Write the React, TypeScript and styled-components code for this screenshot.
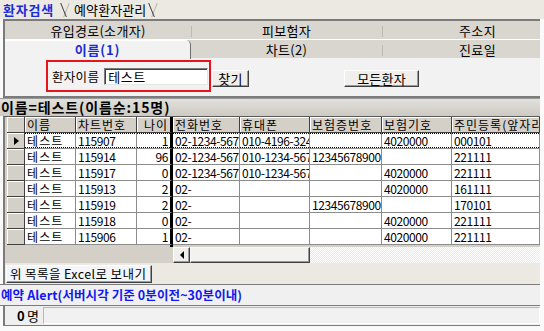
import React from "react";
import styled, { createGlobalStyle, css } from "styled-components";

const GlobalStyle = createGlobalStyle`
  html, body { margin: 0; padding: 0; }
  body {
    background: #fafafa;
    font-family: "Noto Sans CJK KR", "Noto Sans", sans-serif;
    font-size: 12px;
    color: #000;
    width: 544px;
    height: 331px;
    overflow: hidden;
  }
`;

const Page = styled.div`
  width: 544px;
  height: 331px;
  display: flex;
  flex-direction: column;
`;

/* ---------- top tab strip ---------- */
const TopStrip = styled.div`
  height: 19px;
  background: #ebe9e2;
  display: flex;
  padding-left: 2px;
`;

const TopTab = styled.div<{ $active?: boolean }>`
  position: relative;
  display: flex;
  align-items: center;
  height: 19px;
  padding-left: ${(p) => (p.$active ? "1px" : "0")};
  padding-right: ${(p) => (p.$active ? "14px" : "10px")};
  font-size: 13px;
  font-weight: ${(p) => (p.$active ? 700 : 400)};
  letter-spacing: ${(p) => (p.$active ? "0.8px" : "0.1px")};
  color: ${(p) => (p.$active ? "#1b2bd6" : "#000")};
  &::after {
    content: "";
    position: absolute;
    right: 4px;
    top: 3px;
    bottom: 2px;
    border-right: 1px solid #3c3c3c;
    transform: skewX(22deg);
  }
  &::before {
    content: "";
    position: absolute;
    right: 1px;
    top: 3px;
    bottom: 2px;
    border-right: 1px solid #b8b6ae;
    transform: skewX(-22deg);
  }
`;

const TabGap = styled.div`
  width: 6px;
`;

/* ---------- framed sections ---------- */
const Framed = styled.div`
  margin-left: 3px;
  width: 537px;
  box-sizing: border-box;
  border-left: 2px solid #7b7b7b;
`;

const UpperFrame = styled(Framed)`
  border-top: 2px solid #7b7b7b;
  background: #d9d6cf;
  overflow: hidden;
`;

const TabRow = styled.div<{ $first?: boolean }>`
  display: grid;
  grid-template-columns: 186px 191px 191px;
  height: 18px;
  border-bottom: ${(p) => (p.$first ? "1px solid #ffffff" : "none")};
  background: #d9d6cf;
`;

const TabCell = styled.div<{ $selected?: boolean; $sep?: boolean }>`
  position: relative;
  display: flex;
  align-items: center;
  justify-content: center;
  font-size: 13px;
  font-weight: ${(p) => (p.$selected ? 700 : 400)};
  letter-spacing: ${(p) => (p.$selected ? "0.8px" : "0.3px")};
  color: ${(p) => (p.$selected ? "#1b2bd6" : "#000")};
  white-space: nowrap;
  ${(p) =>
    p.$selected &&
    css`
      background: #f2f2f2;
      border-top-right-radius: 5px;
      border-right: 1px solid #6e6e6e;
      box-shadow: inset 0 1px 0 #ffffff;
    `}
  ${(p) =>
    p.$sep &&
    css`
      &::before {
        content: "";
        position: absolute;
        left: 0;
        top: 5px;
        height: 11px;
        border-left: 1px solid #bdbab3;
      }
    `}
`;

const SearchPanel = styled.div`
  height: 38px;
  background: #f2f2f2;
  border-bottom: 2px solid #7b7b7b;
  display: flex;
  align-items: center;
  padding-left: 41px;
`;

const RedBox = styled.div`
  box-sizing: border-box;
  width: 165px;
  height: 32px;
  border: 2px solid #e8141a;
  display: flex;
  align-items: center;
  padding-left: 4px;
  margin-top: 3px;
  margin-bottom: 6px;
`;

const Label = styled.span`
  font-size: 12.5px;
  letter-spacing: 0.3px;
  margin-right: 5px;
  margin-top: 2px;
`;

const InputBox = styled.div`
  box-sizing: border-box;
  width: 104px;
  height: 17px;
  margin-top: 2px;
  background: #fff;
  border: 1px solid;
  border-color: #7a7a7a #e6e6e6 #e6e6e6 #7a7a7a;
  box-shadow: inset 1px 1px 0 #404040;
  font-size: 13px;
  line-height: 15px;
  padding-left: 3px;
  letter-spacing: 0.6px;
`;

const Button = styled.div<{ $w: number; $ml: number }>`
  box-sizing: border-box;
  width: ${(p) => p.$w}px;
  margin-left: ${(p) => p.$ml}px;
  margin-top: 2px;
  height: 17px;
  background: #f0efec;
  border: 1px solid;
  border-color: #ffffff #404040 #404040 #ffffff;
  box-shadow: inset -1px -1px 0 #9a9a9a;
  display: flex;
  align-items: center;
  justify-content: center;
  font-size: 13px;
  letter-spacing: 0.2px;
  white-space: nowrap;
`;

/* ---------- grid caption ---------- */
const Caption = styled.div`
  width: 540px;
  height: 18px;
  box-sizing: border-box;
  background: linear-gradient(#e2e0db, #cdcac3);
  border-top: 1px solid #9a9a9a;
  font-size: 14px;
  font-weight: 700;
  letter-spacing: 0.9px;
  line-height: 17px;
  padding-left: 1px;
  white-space: nowrap;
`;

/* ---------- data grid ---------- */
const GridFrame = styled(Framed)`
  background: #d4d0c8;
  padding-left: 2px;
  border-top: 1px solid #5a5a5a;
`;

const Row = styled.div`
  display: grid;
  grid-template-columns: 18px 51px 61px 36px 67px 70px 72px 70px 88px;
  height: 16px;
`;

const Selector = styled.div`
  box-sizing: border-box;
  height: 16px;
  background: #d4d0c8;
  border-right: 1px solid #404040;
  border-bottom: 1px solid #404040;
  box-shadow: inset 1px 1px 0 #ffffff;
  display: flex;
  align-items: center;
  justify-content: center;
`;

const Pointer = styled.span`
  width: 0;
  height: 0;
  border-left: 5px solid #000;
  border-top: 4px solid transparent;
  border-bottom: 4px solid transparent;
  margin-left: 1px;
`;

const HeadCell = styled.div<{ $right?: boolean; $thick?: boolean }>`
  box-sizing: border-box;
  height: 16px;
  background: #d4d0c8;
  border-right: ${(p) => (p.$thick ? "3px solid #000" : "1px solid #404040")};
  border-bottom: 1px solid #404040;
  box-shadow: inset 1px 1px 0 #ffffff;
  font-size: 12px;
  line-height: 15px;
  letter-spacing: 1px;
  padding: 0 2px;
  text-align: ${(p) => (p.$right ? "right" : "left")};
  white-space: nowrap;
  overflow-x: clip;
  overflow-y: visible;
`;

const dotted = "repeating-linear-gradient(90deg, #000 0 1px, transparent 1px 2px)";

const Cell = styled.div<{ $right?: boolean; $thick?: boolean; $focus?: boolean; $ko?: boolean }>`
  box-sizing: border-box;
  height: 16px;
  background-color: #fff;
  border-right: ${(p) => (p.$thick ? "3px solid #000" : "1px solid #8c8c8c")};
  border-bottom: 1px solid #8c8c8c;
  font-size: 12px;
  line-height: 15px;
  letter-spacing: ${(p) => (p.$ko ? "1.1px" : "-0.4px")};
  padding: 0 2px;
  text-align: ${(p) => (p.$right ? "right" : "left")};
  white-space: nowrap;
  overflow-x: clip;
  overflow-y: visible;
  ${(p) =>
    p.$focus &&
    css`
      background-image: ${dotted}, ${dotted};
      background-size: 100% 1px, 100% 1px;
      background-position: 0 0, 0 100%;
      background-repeat: no-repeat;
    `}
`;

const ScrollRow = styled.div`
  display: flex;
  height: 18px;
`;

const FrozenFill = styled.div`
  width: 163px;
  background: #d4d0c8;
`;

const ThickStub = styled.div`
  width: 3px;
  height: 2px;
  background: #000;
`;

const Scrollbar = styled.div`
  flex: 1;
  margin-top: 2px;
  height: 16px;
  display: flex;
`;

const ArrowBtn = styled.div`
  box-sizing: border-box;
  width: 17px;
  height: 16px;
  background: #f0efec;
  border: 1px solid;
  border-color: #ffffff #404040 #404040 #ffffff;
  box-shadow: inset -1px -1px 0 #9a9a9a;
  display: flex;
  align-items: center;
  justify-content: center;
`;

const LeftArrow = styled.span`
  width: 0;
  height: 0;
  border-right: 4px solid #000;
  border-top: 4px solid transparent;
  border-bottom: 4px solid transparent;
`;

const Thumb = styled.div`
  box-sizing: border-box;
  width: 120px;
  height: 16px;
  background: #f3f2ef;
  border: 1px solid;
  border-color: #f8f8f8 #404040 #404040 #f8f8f8;
  box-shadow: inset -1px -1px 0 #9a9a9a;
`;

const Track = styled.div`
  flex: 1;
  height: 16px;
  background-color: #f5f4f0;
  background-image: repeating-conic-gradient(#ffffff 0 25%, #ebeae4 0 50%);
  background-size: 2px 2px;
`;

/* ---------- bottom sections ---------- */
const ExcelRow = styled(Framed)`
  height: 21px;
  background: #ebe9e2;
  display: flex;
  align-items: center;
  padding-left: 1px;
`;

const ExcelButton = styled.div`
  box-sizing: border-box;
  width: 146px;
  height: 18px;
  background: #f4f5f9;
  border: 1px solid;
  border-color: #ffffff #404040 #404040 #ffffff;
  box-shadow: inset -1px -1px 0 #9a9a9a;
  font-size: 12.5px;
  line-height: 16px;
  padding-left: 3px;
  letter-spacing: 0.4px;
  white-space: nowrap;
  overflow: hidden;
`;

const AlertTitle = styled.div`
  width: 540px;
  height: 22px;
  box-sizing: border-box;
  background: #f0f0f0;
  border-top: 1px solid #7b7b7b;
  border-bottom: 1px solid #7b7b7b;
  color: #1219f0;
  font-size: 12.5px;
  font-weight: 700;
  letter-spacing: 0.1px;
  line-height: 20px;
  padding-left: 1px;
  white-space: nowrap;
`;

const CountRow = styled(Framed)`
  height: 20px;
  background: #efefef;
  border-bottom: 1px solid #7b7b7b;
  display: flex;
  align-items: center;
`;

const CountNum = styled.span`
  font-weight: 700;
  font-size: 13px;
  margin-left: 12px;
  width: 10px;
`;

const CountUnit = styled.span`
  font-size: 13px;
  width: 16px;
`;

const CountBox = styled.div`
  flex: 1;
  height: 17px;
  box-sizing: border-box;
  border: 1px solid;
  border-color: #b8b8b8 #ffffff #ffffff #b8b8b8;
  background: #f1f1f1;
`;

type Rec = {
  name: string;
  chart: string;
  age: string;
  tel: string;
  mobile: string;
  insNo: string;
  insCode: string;
  jumin: string;
};

const rows: Rec[] = [
  { name: "테스트", chart: "115907", age: "1", tel: "02-1234-5678", mobile: "010-4196-3245", insNo: "", insCode: "4020000", jumin: "000101" },
  { name: "테스트", chart: "115914", age: "96", tel: "02-1234-5678", mobile: "010-1234-5678", insNo: "12345678900", insCode: "", jumin: "221111" },
  { name: "테스트", chart: "115917", age: "0", tel: "02-1234-5678", mobile: "010-1234-5678", insNo: "", insCode: "4020000", jumin: "221111" },
  { name: "테스트", chart: "115913", age: "2", tel: "02-", mobile: "", insNo: "", insCode: "4020000", jumin: "161111" },
  { name: "테스트", chart: "115919", age: "2", tel: "02-", mobile: "", insNo: "12345678900", insCode: "", jumin: "170101" },
  { name: "테스트", chart: "115918", age: "0", tel: "02-", mobile: "", insNo: "", insCode: "4020000", jumin: "221111" },
  { name: "테스트", chart: "115906", age: "1", tel: "02-", mobile: "", insNo: "", insCode: "4020000", jumin: "221111" },
];

export default function App() {
  return (
    <Page>
      <GlobalStyle />
      <TopStrip>
        <TopTab $active>환자검색</TopTab>
        <TabGap />
        <TopTab>예약환자관리</TopTab>
      </TopStrip>

      <UpperFrame>
        <TabRow $first>
          <TabCell>유입경로(소개자)</TabCell>
          <TabCell $sep>피보험자</TabCell>
          <TabCell $sep>주소지</TabCell>
        </TabRow>
        <TabRow>
          <TabCell $selected>이름(1)</TabCell>
          <TabCell>차트(2)</TabCell>
          <TabCell $sep>진료일</TabCell>
        </TabRow>
        <SearchPanel>
          <RedBox>
            <Label>환자이름</Label>
            <InputBox>테스트</InputBox>
          </RedBox>
          <Button $w={37} $ml={1}>찾기</Button>
          <Button $w={75} $ml={95}>모든환자</Button>
        </SearchPanel>
      </UpperFrame>

      <Caption>이름=테스트(이름순:15명)</Caption>

      <GridFrame>
        <Row>
          <Selector />
          <HeadCell>이름</HeadCell>
          <HeadCell>차트번호</HeadCell>
          <HeadCell $right $thick>나이</HeadCell>
          <HeadCell>전화번호</HeadCell>
          <HeadCell>휴대폰</HeadCell>
          <HeadCell>보험증번호</HeadCell>
          <HeadCell>보험기호</HeadCell>
          <HeadCell>주민등록(앞자리)</HeadCell>
        </Row>
        {rows.map((r, i) => {
          const f = i === 0;
          return (
            <Row key={i}>
              <Selector>{f && <Pointer />}</Selector>
              <Cell $focus={f} $ko>{r.name}</Cell>
              <Cell $focus={f}>{r.chart}</Cell>
              <Cell $focus={f} $right $thick>{r.age}</Cell>
              <Cell $focus={f}>{r.tel}</Cell>
              <Cell $focus={f}>{r.mobile}</Cell>
              <Cell $focus={f}>{r.insNo}</Cell>
              <Cell $focus={f}>{r.insCode}</Cell>
              <Cell $focus={f}>{r.jumin}</Cell>
            </Row>
          );
        })}
        <ScrollRow>
          <FrozenFill />
          <ThickStub />
          <Scrollbar>
            <ArrowBtn>
              <LeftArrow />
            </ArrowBtn>
            <Thumb />
            <Track />
          </Scrollbar>
        </ScrollRow>
      </GridFrame>

      <ExcelRow>
        <ExcelButton>위 목록을 Excel로 보내기</ExcelButton>
      </ExcelRow>

      <AlertTitle>예약 Alert(서버시각 기준 0분이전~30분이내)</AlertTitle>

      <CountRow>
        <CountNum>0</CountNum>
        <CountUnit>명</CountUnit>
        <CountBox />
      </CountRow>
    </Page>
  );
}
